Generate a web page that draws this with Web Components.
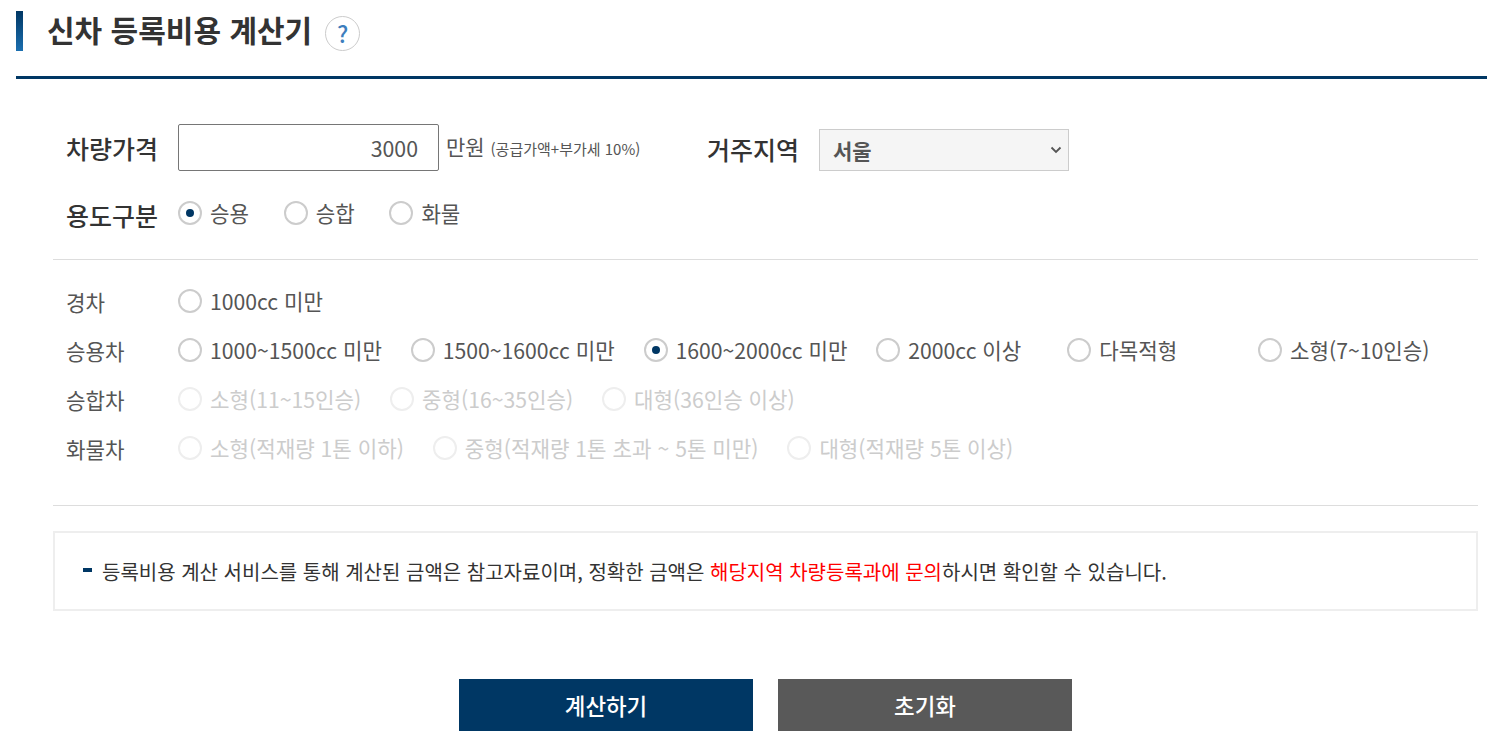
<!DOCTYPE html>
<html lang="ko">
<head>
<meta charset="utf-8">
<title>신차 등록비용 계산기</title>
<style>
  html, body { margin: 0; padding: 0; background: #fff; }
  body { font-family: "Noto Sans CJK KR", "Noto Sans", sans-serif; color: #555; overflow: hidden; }
</style>
</head>
<body>
<calc-page>
  <calc-title slot="title">신차 등록비용 계산기</calc-title>

  <form-row slot="price" label="차량가격">
    <price-input value="3000"></price-input>
    <price-note>만원 <small>(공급가액+부가세 10%)</small></price-note>
    <field-label>거주지역</field-label>
    <region-select>서울</region-select>
  </form-row>

  <option-row slot="use" label="용도구분" strong gap="34.7">
    <radio-option checked>승용</radio-option>
    <radio-option>승합</radio-option>
    <radio-option>화물</radio-option>
  </option-row>

  <option-row slot="cars" label="경차">
    <radio-option>1000cc 미만</radio-option>
  </option-row>
  <option-row slot="cars" label="승용차">
    <radio-option>1000~1500cc 미만</radio-option>
    <radio-option>1500~1600cc 미만</radio-option>
    <radio-option checked>1600~2000cc 미만</radio-option>
    <radio-option wide>2000cc 이상</radio-option>
    <radio-option wide>다목적형</radio-option>
    <radio-option>소형(7~10인승)</radio-option>
  </option-row>
  <option-row slot="cars" label="승합차">
    <radio-option disabled>소형(11~15인승)</radio-option>
    <radio-option disabled>중형(16~35인승)</radio-option>
    <radio-option disabled>대형(36인승 이상)</radio-option>
  </option-row>
  <option-row slot="cars" label="화물차">
    <radio-option disabled>소형(적재량 1톤 이하)</radio-option>
    <radio-option disabled>중형(적재량 1톤 초과 ~ 5톤 미만)</radio-option>
    <radio-option disabled>대형(적재량 5톤 이상)</radio-option>
  </option-row>

  <notice-box slot="notice">등록비용 계산 서비스를 통해 계산된 금액은 참고자료이며, 정확한 금액은 <em>해당지역 차량등록과에 문의</em>하시면 확인할 수 있습니다.</notice-box>

  <action-button slot="actions" primary>계산하기</action-button>
  <action-button slot="actions">초기화</action-button>
</calc-page>

<script>
class CalcTitle extends HTMLElement {
  constructor() {
    super();
    this.attachShadow({ mode: "open" });
    this.shadowRoot.innerHTML = `
      <style>
        :host { display: flex; align-items: flex-start; height: 65px; padding-top: 11px; border-bottom: 3px solid #003764; }
        .bar { width: 7px; height: 40px; background: linear-gradient(#003764, #1b6fb0); }
        h1 { margin: -2px 0 0 24px; font-size: 30px; line-height: 40px; font-weight: 700; color: #333; }
        .help { width: 35px; height: 35px; box-sizing: border-box; margin: 5px 0 0 13px; border: 1px solid #ccc; border-radius: 50%; display: flex; align-items: center; justify-content: center; font-size: 23px; font-weight: 500; color: #3d7ebd; line-height: 1; }
      </style>
      <div class="bar"></div>
      <h1><slot></slot></h1>
      <div class="help">?</div>`;
  }
}

class PriceInput extends HTMLElement {
  constructor() {
    super();
    this.attachShadow({ mode: "open" });
    this.shadowRoot.innerHTML = `
      <style>
        :host { display: block; width: 261px; height: 47px; flex: none; }
        input { display: block; width: 100%; height: 100%; box-sizing: border-box; border: 1px solid #767676; border-radius: 2px; padding: 0 20px 0 0; text-align: right; font: 400 21.3px "Noto Sans CJK KR", sans-serif; color: #555; outline: none; background: #fff; }
      </style>
      <input type="text">`;
  }
  connectedCallback() {
    this.shadowRoot.querySelector("input").value = this.getAttribute("value") || "";
  }
}

class PriceNote extends HTMLElement {
  constructor() {
    super();
    this.attachShadow({ mode: "open" });
    this.shadowRoot.innerHTML = `
      <style>
        :host { display: block; width: 261px; padding-left: 7px; height: 47px; line-height: 44px; font-size: 21px; color: #555; white-space: nowrap; flex: none; }
        ::slotted(small) { font-size: 15px; }
      </style>
      <slot></slot>`;
  }
}

class FieldLabel extends HTMLElement {
  constructor() {
    super();
    this.attachShadow({ mode: "open" });
    this.shadowRoot.innerHTML = `
      <style>
        :host { display: block; width: 112px; height: 42px; font-size: 25px; font-weight: 500; color: #333; line-height: 40px; flex: none; }
      </style>
      <slot></slot>`;
  }
}

class RegionSelect extends HTMLElement {
  constructor() {
    super();
    this.attachShadow({ mode: "open" });
    this.shadowRoot.innerHTML = `
      <style>
        :host { display: block; width: 250px; height: 42px; flex: none; }
        .box { height: 100%; box-sizing: border-box; border: 1px solid #ccc; background: #f5f5f5; display: flex; align-items: center; justify-content: space-between; padding: 0 6px 0 13px; font-size: 21px; font-weight: 700; color: #555; }
        .box span { margin-top: -1px; }
        svg { display: block; }
      </style>
      <div class="box"><span><slot></slot></span>
        <svg width="12" height="8" viewBox="0 0 12 8"><path d="M1.5 1.5 6 6l4.5-4.5" fill="none" stroke="#555" stroke-width="1.8"/></svg>
      </div>`;
  }
}

class RadioOption extends HTMLElement {
  constructor() {
    super();
    this.attachShadow({ mode: "open" });
    this.shadowRoot.innerHTML = `
      <style>
        :host { display: inline-flex; align-items: center; gap: 8px; height: 24px; font-size: 21.2px; color: #555; white-space: nowrap; }
        :host([wide]) { min-width: 162px; }
        :host([disabled]) { color: #ccc; }
        .dot { width: 24px; height: 24px; box-sizing: border-box; border: 2px solid #ccc; border-radius: 50%; display: flex; align-items: center; justify-content: center; background: #fff; flex: none; }
        :host([disabled]) .dot { border-color: #eee; }
        :host([checked]) .dot::after { content: ""; width: 8px; height: 8px; border-radius: 50%; background: #003764; }
        span { line-height: 24px; margin-top: -1px; }
      </style>
      <div class="dot"></div><span><slot></slot></span>`;
  }
}

class OptionRow extends HTMLElement {
  constructor() {
    super();
    this.attachShadow({ mode: "open" });
    this.shadowRoot.innerHTML = `
      <style>
        :host { display: flex; align-items: flex-start; height: 49px; --gap: 28.9px; }
        .label { width: 112px; padding-left: 13px; margin-top: -1px; line-height: 28px; font-size: 21.2px; color: #555; flex: none; }
        :host([strong]) { height: 58px; }
        :host([strong]) .label { margin-top: 0; font-size: 25px; font-weight: 500; color: #333; }
        .items { display: flex; column-gap: var(--gap); }
      </style>
      <div class="label"></div>
      <div class="items"><slot></slot></div>`;
  }
  connectedCallback() {
    this.shadowRoot.querySelector(".label").textContent = this.getAttribute("label");
    if (this.hasAttribute("gap")) this.style.setProperty("--gap", this.getAttribute("gap") + "px");
  }
}

class FormRow extends HTMLElement {
  constructor() {
    super();
    this.attachShadow({ mode: "open" });
    this.shadowRoot.innerHTML = `
      <style>
        :host { display: flex; align-items: flex-end; height: 47px; margin-bottom: 30px; }
        .label { width: 112px; padding-left: 13px; height: 42px; font-size: 25px; font-weight: 500; color: #333; line-height: 39px; flex: none; }
      </style>
      <div class="label"></div><slot></slot>`;
  }
  connectedCallback() {
    this.shadowRoot.querySelector(".label").textContent = this.getAttribute("label");
  }
}

class NoticeBox extends HTMLElement {
  constructor() {
    super();
    this.attachShadow({ mode: "open" });
    this.shadowRoot.innerHTML = `
      <style>
        :host { display: flex; align-items: center; height: 80px; box-sizing: border-box; border: 2px solid #eee; padding-left: 28px; font-size: 20px; color: #333; }
        .mark { width: 9px; height: 4px; margin: -3px 10px 0 0; background: #003764; flex: none; }
        ::slotted(em) { font-style: normal; color: #f00; }
      </style>
      <div class="mark"></div><div><slot></slot></div>`;
  }
}

class ActionButton extends HTMLElement {
  constructor() {
    super();
    this.attachShadow({ mode: "open" });
    this.shadowRoot.innerHTML = `
      <style>
        :host { display: flex; align-items: center; justify-content: center; width: 294px; height: 52px; background: #595959; color: #fff; font-size: 22.4px; font-weight: 500; }
        :host([primary]) { background: #003764; }
      </style>
      <slot></slot>`;
  }
}

class CalcPage extends HTMLElement {
  constructor() {
    super();
    this.attachShadow({ mode: "open" });
    this.shadowRoot.innerHTML = `
      <style>
        :host { display: block; padding-left: 16px; }
        .body { padding: 45px 9px 0 37px; }
        hr { border: 0; border-top: 1px solid #ddd; margin: 0; }
        .cars { padding: 29px 0 20px; }
        .notice { margin-top: 25px; }
        .actions { display: flex; justify-content: center; gap: 25px; margin-top: 68px; }
      </style>
      <slot name="title"></slot>
      <div class="body">
        <slot name="price"></slot>
        <slot name="use"></slot>
        <hr>
        <div class="cars"><slot name="cars"></slot></div>
        <hr>
        <div class="notice"><slot name="notice"></slot></div>
        <div class="actions"><slot name="actions"></slot></div>
      </div>`;
  }
}

customElements.define("calc-title", CalcTitle);
customElements.define("price-input", PriceInput);
customElements.define("price-note", PriceNote);
customElements.define("field-label", FieldLabel);
customElements.define("region-select", RegionSelect);
customElements.define("radio-option", RadioOption);
customElements.define("option-row", OptionRow);
customElements.define("form-row", FormRow);
customElements.define("notice-box", NoticeBox);
customElements.define("action-button", ActionButton);
customElements.define("calc-page", CalcPage);
</script>
</body>
</html>
